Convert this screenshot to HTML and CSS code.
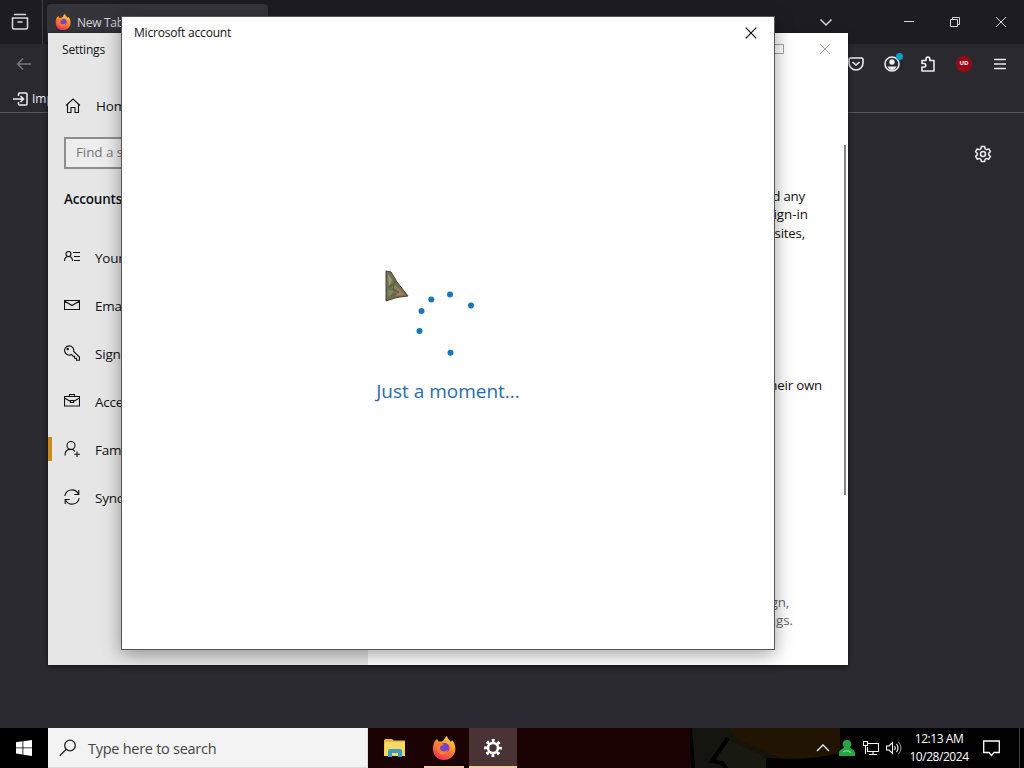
FILE: index.html
```
<!DOCTYPE html>
<html lang="en">
<head>
    <meta charset="UTF-8">
    <meta name="viewport" content="width=device-width, initial-scale=1.0">
    <title>Desktop</title>
    <link rel="stylesheet" href="styles.css">
</head>
<body>
    <!-- shared symbols -->
    <svg class="defs" width="0" height="0">
        <defs>
            <linearGradient id="fox" x1="0.8" y1="0" x2="0.3" y2="1">
                <stop offset="0" stop-color="#ffe04a"/>
                <stop offset="0.45" stop-color="#ff8a2a"/>
                <stop offset="1" stop-color="#f02a5c"/>
            </linearGradient>
            <symbol id="firefox" viewBox="0 0 24 24">
                <path d="M3 5l2-2 1.500 2.500h3L12 4c.5-2 1.500-3 3-4 .5 3 3 4 4 6l1-2c3 3 4 8 3 12-1.500 5-6 8-11 8C5 24 1 19 1 13c0-3 .5-6 2-8z" fill="url(#fox)"/>
                <circle cx="12.500" cy="12" r="5" fill="#7542c9"/>
                <path d="M5 8c3-1.500 5-1 7 1l-3 1c-2 1-1 4 1 5 2 .8 4 .3 6-1-1 4-4 5-7 4.500C5 17.500 3.500 12 5 8z" fill="#ff7a35"/>
            </symbol>
        </defs>
    </svg>

    <div class="browser">
        <div class="tab-bar">
            <div class="firefox-view">
                <svg width="18" height="18" viewBox="0 0 18 18" fill="none" stroke="#d8d8dd" stroke-width="1.500"><path d="M3.500 1.500h11M1.500 5h15v9.500a1.500 1.500 0 0 1-1.500 1.500H3a1.500 1.500 0 0 1-1.500-1.500zM7 9h4" stroke-linecap="round"/></svg>
            </div>
            <div class="tab">
                <svg width="16" height="16"><use href="#firefox"/></svg>
                <span>New Tab</span>
            </div>
            <div class="window-buttons">
                <svg width="14" height="14" viewBox="0 0 14 14"><path d="M1.500 4.500L7 10l5.500-5.500"/></svg>
                <svg width="12" height="12" viewBox="0 0 12 12"><path d="M1 5.500h10"/></svg>
                <svg width="12" height="12" viewBox="0 0 12 12"><path d="M1.500 3.500h7v7h-7zM3.500 3.500v-2h7v7h-2"/></svg>
                <svg width="12" height="12" viewBox="0 0 12 12"><path d="M1 1l10 10M11 1L1 11"/></svg>
            </div>
        </div>
        <div class="toolbar">
            <svg class="back" width="16" height="14" viewBox="0 0 16 14"><path d="M15 7H1.500M7 1.500L1.500 7 7 12.500"/></svg>
            <div class="tools">
                <svg width="18" height="18" viewBox="0 0 18 18"><path d="M3.500 3h11a1.500 1.500 0 0 1 1.500 1.500V8A7 7 0 0 1 2 8V4.500A1.500 1.500 0 0 1 3.500 3zM5.500 7L9 10l3.500-3"/></svg>
                <div class="account">
                    <svg width="18" height="18" viewBox="0 0 18 18"><circle cx="9" cy="9" r="7"/><circle cx="9" cy="7" r="2.700" class="solid"/><path class="solid" d="M4.500 11.500h9C12.500 14 11 15 9 15s-3.500-1-4.500-3.500z"/></svg>
                    <span class="badge"></span>
                </div>
                <svg width="18" height="18" viewBox="0 0 18 18"><path d="M3 5.500h4V4a1.900 1.900 0 0 1 3.800 0v1.500H15V16H3v-4h2a1.700 1.700 0 0 0 0-3.500H3z" stroke-linejoin="round"/></svg>
                <div class="ublock">UD</div>
                <svg width="18" height="18" viewBox="0 0 18 18"><path d="M3 4.500h12M3 9h12M3 13.500h12"/></svg>
            </div>
        </div>
        <div class="bookmarks">
            <svg width="16" height="14" viewBox="0 0 16 14"><path d="M5.500 4V2A1 1 0 0 1 6.500 1H13a1 1 0 0 1 1 1v10a1 1 0 0 1-1 1H6.500a1 1 0 0 1-1-1v-2M0 7h10M7.500 4l3 3-3 3"/></svg>
            <span>Imp</span>
        </div>
        <div class="page">
            <svg width="18" height="18" viewBox="0 0 18 18"><path d="M7.400 1.500h3.200l.5 2.300 1.500.9 2.200-.8 1.600 2.800-1.700 1.500v1.700l1.700 1.500-1.600 2.800-2.200-.8-1.500.9-.5 2.300H7.400l-.5-2.300-1.500-.9-2.200.8-1.600-2.800 1.700-1.500V8.200L1.600 6.700l1.600-2.800 2.200.8 1.500-.9z" stroke-linejoin="round"/><circle cx="9" cy="9" r="2.500"/></svg>
        </div>
    </div>

    <div class="settings">
        <div class="sidebar">
            <div class="settings-title">Settings</div>
            <div class="nav-item home">
                <svg width="16" height="16" viewBox="0 0 16 16"><path d="M1 7.500L8 1l7 6.500M2.500 6.500v8h3.500V9.500h4v5h3.500v-8"/></svg>
                <span>Home</span>
            </div>
            <div class="find">Find a setting</div>
            <div class="section">Accounts</div>
            <div class="nav-item">
                <svg width="16" height="16" viewBox="0 0 16 16"><circle cx="4.500" cy="5" r="2.500"/><path d="M.5 12c0-6 8-6 8 0M9 3.500h7M10 7.500h6M10 11.500h6"/></svg>
                <span>Your info</span>
            </div>
            <div class="nav-item">
                <svg width="16" height="16" viewBox="0 0 16 16"><path d="M.5 3.500h15v9H.5zM.5 4L8 8.500 15.500 4"/></svg>
                <span>Email &amp; accounts</span>
            </div>
            <div class="nav-item">
                <svg width="16" height="16" viewBox="0 0 16 16"><path d="M7.500 9.500A4.600 4.600 0 1 1 9.700 6.500L15.500 12v3.200h-3v-2h-2v-2h-1.500z"/><circle cx="3.700" cy="4" r=".7"/></svg>
                <span>Sign-in options</span>
            </div>
            <div class="nav-item">
                <svg width="16" height="16" viewBox="0 0 16 16"><path d="M.5 3.500h15V13H.5zM5.500 3.500v-2h5v2M.5 5L6.500 8.500M9.500 8.500L15.500 5M6.500 7.500h3v2h-3z"/></svg>
                <span>Access work or school</span>
            </div>
            <div class="nav-item active">
                <svg width="16" height="16" viewBox="0 0 16 16"><circle cx="7" cy="4.500" r="4"/><path d="M1 14.500c0-8 8-7 10-4M13 10.500v5.500M10.200 13.200H16"/></svg>
                <span>Family &amp; other users</span>
            </div>
            <div class="nav-item">
                <svg width="16" height="16" viewBox="0 0 16 16"><path d="M.8 7C2 0 11-1.500 14.500 5M14.800 1v4.500h-4.500M15.200 9C14 16 5 17.500 1.500 11M1.200 15v-4.500h4.500"/></svg>
                <span>Sync your settings</span>
            </div>
        </div>
        <div class="content">
            <div class="content-buttons">
                <svg width="10" height="10" viewBox="0 0 10 10"><path d="M.5.5h9v9h-9z"/></svg>
                <svg width="10" height="10" viewBox="0 0 10 10"><path d="M0 0l10 10M10 0L0 10"/></svg>
            </div>
            <div class="text family">
                <p class="short">and any</p>
                <p class="wide">sign-in</p>
                <p class="short">sites,</p>
            </div>
            <div class="text others"><p>their own</p></div>
            <div class="text kiosk">
                <p class="indent">sign,</p>
                <p class="wide">ngs.</p>
            </div>
            <div class="scrollbar"></div>
        </div>
    </div>

    <div class="dialog">
        <div class="dialog-bar">
            <span>Microsoft account</span>
            <svg width="12" height="12" viewBox="0 0 12 12"><path d="M.7.7l10.600 10.600M11.300.7L.7 11.300"/></svg>
        </div>
        <div class="loading">
            <svg width="64" height="66" viewBox="0 0 64 66" fill="#1976b8">
                <circle cx="34" cy="4.500" r="3"/>
                <circle cx="55" cy="15.500" r="3"/>
                <circle cx="15.300" cy="9.500" r="3"/>
                <circle cx="5.500" cy="21" r="3"/>
                <circle cx="3.500" cy="41" r="3"/>
                <circle cx="34.500" cy="62.800" r="3"/>
            </svg>
            <p>Just a moment...</p>
        </div>
    </div>

    <svg class="cursor" width="24" height="32" viewBox="0 0 24 32">
        <path d="M1 1l5 1 6 10 11 14-8 1-5 1-9 3z" fill="#6d7053" stroke="#4a4632"/>
        <path d="M3 4l4 6-3 7z" fill="#9b9c75"/>
        <path d="M8 12l5 7-6-1zM3 20l6 1-5 6z" fill="#868a52"/>
        <path d="M12 17l8 8-9 1z" fill="#a8785c"/>
        <path d="M3 17l6-3-1 6 6 2-8 4M10 11l-2 6" fill="none" stroke="#4c5630" stroke-width=".8"/>
    </svg>

    <div class="taskbar">
        <div class="start">
            <svg width="16" height="16" viewBox="0 0 16 16" fill="#fff"><path d="M0 2.200l6.500-.9v6.200H0zM7.300 1.200L16 0v7.500H7.300zM0 8.300h6.500v6.200L0 13.600zM7.300 8.300H16V16l-8.700-1.300z"/></svg>
        </div>
        <div class="search">
            <svg width="18" height="18" viewBox="0 0 18 18"><circle cx="11" cy="6.500" r="5.300"/><path d="M7.200 10.300L.8 16.700"/></svg>
            <span>Type here to search</span>
        </div>
        <div class="apps">
            <div class="app">
                <svg width="22" height="18" viewBox="0 0 22 18">
                    <path d="M0 1.500A1.500 1.500 0 0 1 1.500 0H8l2 1.500h11V17H0z" fill="#e5b93c"/>
                    <path d="M1 3h20v14H0z" fill="#f6d865"/>
                    <path d="M4 18v-6a2 2 0 0 1 2-2h10a2 2 0 0 1 2 2v6h-4v-4H8v4z" fill="#3b9bc8"/>
                </svg>
            </div>
            <div class="app running"><svg width="24" height="24"><use href="#firefox"/></svg></div>
            <div class="app running selected">
                <svg width="18" height="18" viewBox="0 0 18 18" fill="none" stroke="#fff"><circle cx="9" cy="9" r="5" stroke-width="2.600"/><circle cx="9" cy="9" r="7.400" stroke-width="3" stroke-dasharray="2.900 2.910" stroke-dashoffset="1.450"/></svg>
            </div>
        </div>
        <svg class="wallpaper" width="150" height="40" viewBox="0 0 150 40">
            <path d="M0 0h150v40H0z" fill="#17130b"/>
            <path d="M0 0h46L30 28l10 12H2z" fill="#15150f"/>
            <path d="M38 0h112v27q-30 8-60 3L46 10z" fill="#211402"/>
            <path d="M150 25q-30 8-74 5v10h74z" fill="#030202"/>
            <path d="M38 12l38 18v10H34l-9-6z" fill="#181a12"/>
            <path d="M38 10L22 33l10 2 5 6" fill="none" stroke="#020202" stroke-width="4"/>
            <path d="M0 0l3 40" stroke="#020202" stroke-width="4"/>
        </svg>
        <div class="tray">
            <svg width="14" height="10" viewBox="0 0 14 10"><path d="M1 8l6-6 6 6"/></svg>
            <svg width="16" height="16" viewBox="0 0 16 16" class="user"><path d="M8 0a4 4 0 0 1 3 7c0 2 5 2 5 6v3H0v-3c0-4 5-4 5-6a4 4 0 0 1 3-7z"/><path d="M4 12c3-2 7-1 8 1" class="shine"/></svg>
            <svg width="16" height="14" viewBox="0 0 16 14" class="net"><path d="M5 2.500h10.500v8H4.500V6M.5.5h4v4h-4zM2.500 4.500V13M10 10.500V13M6 13.500h8"/></svg>
            <svg width="16" height="14" viewBox="0 0 16 14" class="sound"><path d="M.5 5h2.500L6.500 1.500v11L3 9H.5zM8.500 5q1.500 2 0 4M10.500 3q3 4 0 8"/><path d="M12.500 1q5 6 0 12" opacity=".55"/></svg>
            <div class="clock">
                <span>12:13 AM</span>
                <span class="date">10/28/2024</span>
            </div>
            <svg width="17" height="17" viewBox="0 0 17 17"><path d="M.7 1h15.600v11.500H11L8.500 15.500 6 12.500H.7z"/></svg>
        </div>
        <div class="show-desktop"></div>
    </div>
</body>
</html>
```
FILE: styles.css
```
* { box-sizing: border-box; margin: 0; padding: 0; }
body {
    width: 1024px;
    height: 768px;
    position: relative;
    overflow: hidden;
    background-color: #2a2930;
    font-family: "Open Sans", "Noto Sans", sans-serif;
    color: #111;
}
svg { display: block; flex: none; }
.defs { position: absolute; }
span, p { white-space: nowrap; }

/* browser */
.browser {
    height: 728px;
    display: flex;
    flex-direction: column;
}
.tab-bar {
    height: 44px;
    display: flex;
    background-color: #1d1c22;
}
.firefox-view {
    width: 43px;
    padding: 13px 0 0 11px;
    border-right: 1px solid #404047;
}
.tab {
    width: 221px;
    height: 40px;
    margin: 4px 0 0 4px;
    padding: 10px 8px;
    display: flex;
    gap: 6px;
    background-color: #35343b;
    border-radius: 4px;
    color: #d2d2d8;
    font-size: 12px;
    line-height: 17px;
    letter-spacing: -0.3px;
}
.window-buttons {
    margin-left: auto;
    padding-right: 17px;
    display: flex;
    align-items: center;
    gap: 34px;
    fill: none;
    stroke: #d5d5da;
}
.window-buttons svg:first-child { margin-right: 36px; stroke-width: 1.5; }
.toolbar {
    height: 42px;
    padding: 0 15px 2px 16px;
    display: flex;
    align-items: center;
    justify-content: space-between;
}
.back { fill: none; stroke: #77767d; stroke-width: 1.5; }
.tools {
    display: flex;
    align-items: center;
    gap: 18px;
    fill: none;
    stroke: #ececf0;
    stroke-width: 1.6;
}
.tools .solid { fill: #ececf0; stroke: none; }
.account { position: relative; }
.badge {
    position: absolute;
    right: -2px;
    top: -2px;
    width: 7px;
    height: 7px;
    border-radius: 50%;
    background-color: #0da1c7;
}
.ublock {
    width: 16px;
    height: 16px;
    margin: 0 1px;
    border-radius: 50%;
    background-color: #980814;
    color: #fff;
    font-size: 6px;
    font-weight: bold;
    line-height: 15px;
    text-align: center;
}
.bookmarks {
    height: 27px;
    padding: 0 0 1px 13px;
    display: flex;
    align-items: center;
    gap: 3px;
    border-bottom: 1px solid #57565d;
    color: #ececf0;
    font-size: 12px;
    fill: none;
    stroke: #ececf0;
    stroke-width: 1.5;
}
.bookmarks span { stroke: none; }
.page {
    flex: 1;
    padding: 32px 32px 0 0;
    display: flex;
    justify-content: flex-end;
    fill: none;
    stroke: #ececf0;
    stroke-width: 1.5;
}

/* settings window */
.settings {
    position: absolute;
    left: 48px;
    top: 33px;
    width: 800px;
    height: 632px;
    display: flex;
    background-color: #fff;
    box-shadow: 0 1px 5px rgba(0, 0, 0, 0.6);
    letter-spacing: -0.2px;
}
.sidebar {
    width: 320px;
    background-color: #e6e6e6;
    fill: none;
    stroke: #111;
    stroke-width: 1.1;
}
.sidebar div, .sidebar span { stroke: none; }
.sidebar .nav-item svg { stroke: #111; }
.settings-title {
    height: 49px;
    padding: 8px 0 0 14px;
    font-size: 12px;
    line-height: 17px;
}
.nav-item {
    height: 48px;
    padding: 0 0 1px 16px;
    display: flex;
    align-items: center;
    gap: 15px;
    font-size: 13.5px;
}
.nav-item span { padding-top: 2px; }
.nav-item.active {
    position: relative;
}
.nav-item.active::before {
    content: "";
    position: absolute;
    left: 0;
    top: 12px;
    width: 4px;
    height: 24px;
    background-color: #c98a1f;
}
.home { padding-left: 17px; }
.home span { padding: 0; }
.find {
    width: 288px;
    height: 32px;
    margin: 7px 0 0 16px;
    padding-left: 10px;
    border: 2px solid #8d8d8d;
    background-color: #ededed;
    color: #777;
    font-size: 13.5px;
    line-height: 27px;
    letter-spacing: -0.1px;
}
.section {
    height: 64px;
    padding: 20px 0 0 16px;
    font-size: 13.5px;
    font-weight: 600;
    line-height: 20px;
}
.content {
    flex: 1;
    position: relative;
    font-size: 13.3px;
    line-height: 18.3px;
    text-align: right;
}
.content-buttons {
    height: 154px;
    padding: 11px 18px 0 0;
    display: flex;
    justify-content: flex-end;
    gap: 36px;
    fill: none;
    stroke: #a7a49c;
}
.text { padding-right: 40px; }
.short { padding-right: 3px; }
.indent { padding-right: 4px; }
.wide { letter-spacing: 0; }
.others {
    padding: 134px 26px 0 0;
}
.kiosk {
    padding: 199px 55px 0 0;
    color: #666;
}
.scrollbar {
    position: absolute;
    right: 2px;
    top: 112px;
    width: 2px;
    height: 350px;
    background-color: #858585;
}

/* account dialog */
.dialog {
    position: absolute;
    left: 121px;
    top: 16px;
    width: 654px;
    height: 634px;
    border: 1px solid #555;
    background-color: #fefefe;
    box-shadow: 0 4px 17px rgba(0, 0, 0, 0.38);
}
.dialog-bar {
    height: 32px;
    padding: 0 17px 0 12px;
    display: flex;
    align-items: center;
    justify-content: space-between;
    font-size: 12px;
    letter-spacing: -0.2px;
    stroke: #111;
    stroke-width: 1.2;
}
.dialog-bar span { padding-bottom: 2px; stroke: none; }
.loading {
    padding-top: 241px;
    display: flex;
    flex-direction: column;
    align-items: center;
    color: #2a6ca6;
}
.loading p {
    margin-top: 20px;
    font-size: 19px;
    line-height: 30px;
}
.cursor {
    position: absolute;
    left: 385px;
    top: 270px;
}

/* taskbar */
.taskbar {
    height: 40px;
    display: flex;
    background-color: #030202;
}
.start {
    width: 48px;
    padding: 12px 16px;
    background-color: #000;
}
.search {
    width: 320px;
    padding-left: 12px;
    display: flex;
    align-items: center;
    gap: 11px;
    background-color: #f3f3f3;
    border: 1px solid #ddd;
    border-width: 0 1px 1px 0;
    color: #444;
    font-size: 14.5px;
    letter-spacing: -0.27px;
    fill: none;
    stroke: #222;
    stroke-width: 1.3;
}
.search svg { margin-left: -1px; }
.search span { padding-top: 1px; stroke: none; }
.apps {
    width: 322px;
    padding-left: 3px;
    display: flex;
    background-color: #1c0303;
}
.app {
    width: 49px;
    padding-right: 2px;
    display: flex;
    align-items: center;
    justify-content: center;
}
.running {
    background: linear-gradient(#f4c9a4, #f4c9a4) 4px bottom / 40px 2px no-repeat;
}
.selected {
    width: 48px;
    padding: 0;
    background-color: #493335;
    background-position: 0 bottom;
    background-size: 48px 2px;
}
.tray {
    margin-left: -24px;
    display: flex;
    align-items: center;
    z-index: 1;
    fill: none;
    stroke: #fff;
    stroke-width: 1.3;
}
.user { margin-left: 9px; fill: #27a443; stroke: none; }
.user .shine { fill: none; stroke: #7dce82; }
.net { margin-left: 8px; stroke-width: 1.1; }
.sound { margin-left: 7px; stroke-width: 1.1; }
.clock {
    width: 74px;
    margin-right: 7px;
    display: flex;
    flex-direction: column;
    align-items: center;
    color: #fff;
    font-size: 12px;
    line-height: 18px;
    letter-spacing: -0.45px;
    stroke: none;
}
.show-desktop {
    width: 5px;
    margin-left: auto;
    border-left: 1px solid #3c3c3c;
}
```
